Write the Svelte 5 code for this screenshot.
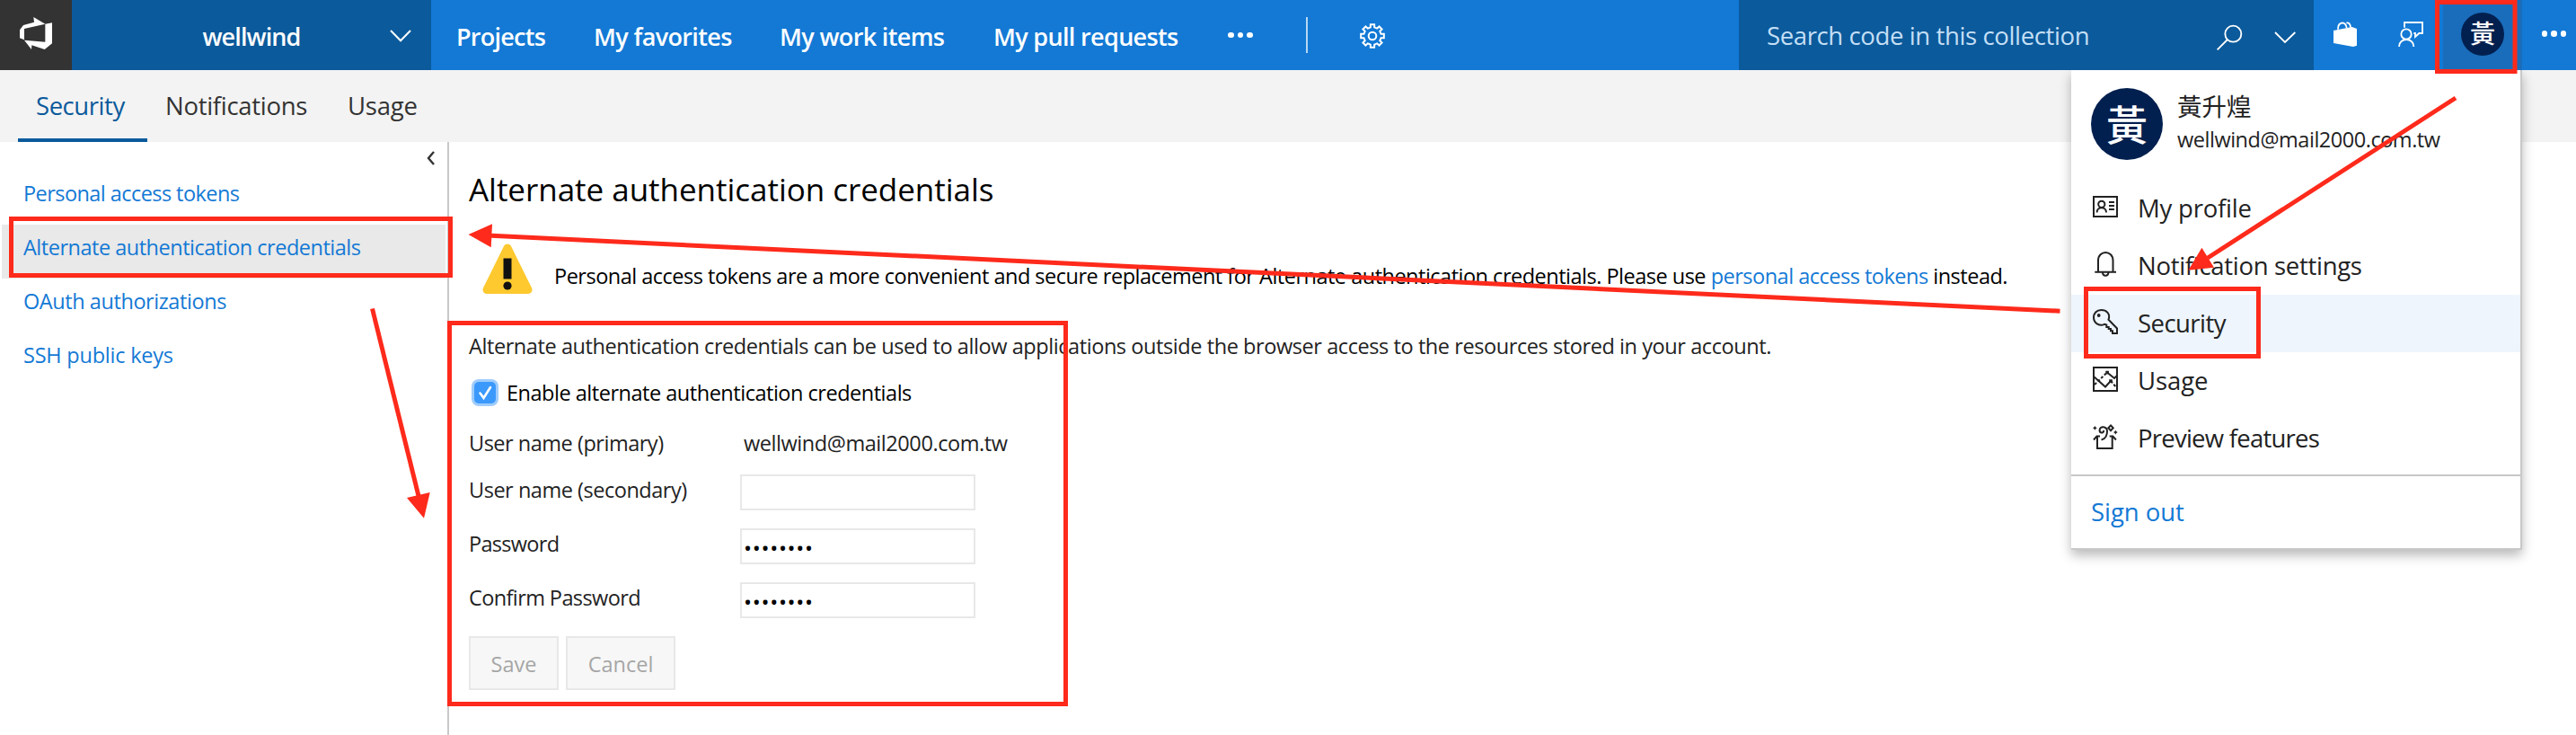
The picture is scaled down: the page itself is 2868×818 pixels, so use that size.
<script>
  const nav = [
    { label: 'Projects', track: -0.75 },
    { label: 'My favorites', track: -0.62 },
    { label: 'My work items', track: -0.64 },
    { label: 'My pull requests', track: -0.66 }
  ];
  const side = [
    { label: 'Personal access tokens', track: -0.56 },
    { label: 'Alternate authentication credentials', track: -0.49, active: true },
    { label: 'OAuth authorizations', track: -0.43 },
    { label: 'SSH public keys', track: -0.22 }
  ];
  const menu = [
    { id: 'profile', label: 'My profile', track: -0.2 },
    { id: 'bell', label: 'Notification settings', track: -0.3 },
    { id: 'key', label: 'Security', track: -0.55, active: true },
    { id: 'usage', label: 'Usage', track: -0.1 },
    { id: 'preview', label: 'Preview features', track: -0.76 }
  ];

  // Eight-toothed gear outline around (14, 14)
  const gear = (() => {
    const pts = [];
    const at = (deg, r) => {
      const a = ((deg - 90) * Math.PI) / 180;
      pts.push(`${(14 + r * Math.cos(a)).toFixed(2)} ${(14 + r * Math.sin(a)).toFixed(2)}`);
    };
    for (let i = 0; i < 8; i++) {
      const c = i * 45;
      at(c - 13, 9.8);
      at(c - 9.5, 13);
      at(c + 9.5, 13);
      at(c + 13, 9.8);
    }
    return 'M' + pts.join('L') + 'Z';
  })();
</script>

<div class="page">
  <header>
    <div class="logo">
      <svg width="70" height="56" viewBox="0 0 210 168" fill="#fff">
        <path d="M36 70 48 54 84 44 82 27 121 50 51 66V103L36 97Z" />
        <path d="M121 50 144 46V115L119 135 76 121 75 135 51 104 121 110Z" />
      </svg>
    </div>
    <div class="account">
      <span>wellwind</span>
      <svg class="acc-chev" width="24" height="14" viewBox="0 0 24 14"><path d="M1 1 12 12.3 23 1" /></svg>
    </div>
    <nav>
      {#each nav as n}<span style:letter-spacing="{n.track}px">{n.label}</span>{/each}
      <i class="dots"><b></b><b></b><b></b></i>
    </nav>
    <div class="sep"></div>
    <svg class="gear" width="28" height="28" viewBox="0 0 28 28"><path d={gear} /><circle cx="14" cy="14" r="4.3" /></svg>
    <div class="grow"></div>
    <div class="search">
      <span>Search code in this collection</span>
      <svg width="116" height="78" viewBox="0 -30 348 234">
        <circle cx="79" cy="83" r="27" /><path d="M60 102 26 136M219 78 252 111 286 78" />
      </svg>
    </div>
    <svg class="tool" width="72" height="78" viewBox="348 -30 216 234">
      <path d="M414 72 476 60 492 66V122L480 126 414 114Z" fill="#fff" stroke="none" />
      <path d="M429 68C429 40 457 40 458 64M457 47C466 44 471 52 471 62" />
    </svg>
    <svg class="tool" width="72" height="78" viewBox="564 -30 216 234">
      <path d="M651 62V45H711V81H700L687 93V81H682" /><circle cx="657" cy="84" r="17" /><path d="M633 126C633 94 682 94 682 126" />
    </svg>
    <div class="me"><div class="avatar small">黃</div></div>
    <div class="more"><i class="dots"><b></b><b></b><b></b></i></div>
  </header>

  <div class="tabs">
    <span class="on">Security</span>
    <span class="t2">Notifications</span>
    <span class="t3">Usage</span>
  </div>

  <div class="body">
    <aside>
      <div class="collapse"><svg width="10" height="16" viewBox="0 0 10 16"><path d="M8 1 2 8 8 15" /></svg></div>
      {#each side as s}
        <div class="srow" class:active={s.active} style:letter-spacing="{s.track}px">{s.label}</div>
      {/each}
    </aside>

    <main>
      <h1>Alternate authentication credentials</h1>
      <div class="warn">
        <svg width="56" height="58" viewBox="0 0 56 58">
          <path d="M28 5 51 51.500H5Z" fill="#fdc92f" stroke="#fdc92f" stroke-width="9" stroke-linejoin="round" />
          <path d="M23.500 16.500h9v23h-9z" fill="#111" /><circle cx="28" cy="47" r="4.6" fill="#111" />
        </svg>
        <p>Personal access tokens are a more convenient and secure replacement for Alternate authentication credentials. Please use <a>personal access tokens</a> instead.</p>
      </div>
      <p class="intro">Alternate authentication credentials can be used to allow applications outside the browser access to the resources stored in your account.</p>
      <div class="check">
        <span class="box"><svg width="24" height="24" viewBox="0 0 24 24"><path d="M6.500 12.500 10.500 18 18 6" /></svg></span>
        <span>Enable alternate authentication credentials</span>
      </div>
      <div class="row first"><label>User name (primary)</label><span class="val">wellwind@mail2000.com.tw</span></div>
      <div class="row"><label class="sec">User name (secondary)</label><div class="field"></div></div>
      <div class="row"><label class="pw">Password</label><div class="field">••••••••</div></div>
      <div class="row"><label class="cpw">Confirm Password</label><div class="field">••••••••</div></div>
      <div class="buttons"><button class="save">Save</button><button class="cancel">Cancel</button></div>
    </main>
  </div>

  <div class="menu">
    <div class="who">
      <div class="avatar">黃</div>
      <div class="id"><div class="name">黃升煌</div><div class="mail">wellwind@mail2000.com.tw</div></div>
    </div>
    {#each menu as m}
      <div class="item" class:active={m.active}>
        <svg width="28" height="28" viewBox="0 0 28 28">
          {#if m.id === 'profile'}
            <rect x="1" y="1" width="26" height="22" /><circle cx="9.8" cy="9.300" r="3.600" />
            <path d="M4.600 18.500C4.600 11.400 15 11.400 15 18.500M18 7h6M18 11h6M18 15h6" />
          {:else if m.id === 'bell'}
            <path d="M6 20.500V8C6-4 22.500-4 22.500 8V20.500M2.300 20.700H26M11 21C11 26 17.400 26 17.400 21" />
          {:else if m.id === 'key'}
            <circle class="fill" cx="6.700" cy="5" r="1.900" />
            <path d="M17.500 9.700C20 3 15-1 9.500-1 4-1 1 3 1 7.300 1 14 8 17.500 13 14.800L15.300 15.500V18H17.700V20H20V22.300H22V25H27V19.500Z" />
          {:else if m.id === 'usage'}
            <rect x="1" y="-1" width="26" height="26" />
            <path d="M1 9 14 20.500 20 14M16 4.500 24 11 27 8" /><path stroke-dasharray="3 2" d="M2 18 16 4.500M20 14 27 22" />
            <path class="fill" d="M14.300 2.700h3.600v3.600h-3.600zM18.200 12.200h3.600v3.600h-3.600z" />
          {:else}
            <path d="M1 15.500 4.500 11.500H8M5 12V25H21.700V12M18.700 11.500H22.300L25.900 15.500" />
            <path d="M9.500 15.500C14.500 14.500 16 9.500 16 6 16 .5 8-.5 7.600 4.500 7.400 8.500 12.300 8.500 12.200 5" />
            <path class="fill" d="M2.300 0 3.300 1.500 4.800 2.300 3.300 3.200 2.300 4.700 1.400 3.200 0 2.300 1.400 1.500ZM25.300 4.700 26.300 6.200 27.800 7 26.300 7.900 25.300 9.400 24.400 7.900 23 7 24.400 6.200Z" />
            <path d="M20-.6 22.700 2.300 20 5.200 17.300 2.300Z" />
          {/if}
        </svg>
        <span style:letter-spacing="{m.track}px">{m.label}</span>
      </div>
    {/each}
    <div class="out">Sign out</div>
  </div>

  <svg class="marks" width="2868" height="818" viewBox="0 0 2868 818">
    <g fill="none" stroke="#fe2a1b" stroke-width="5">
      <rect x="2713.500" y="2.500" width="86.500" height="77" />
      <rect x="2322.500" y="321.500" width="192" height="75" />
      <rect x="12.500" y="243.500" width="489" height="63" />
      <rect x="500.500" y="359.500" width="686" height="424" />
      <path d="M2734 109 2458 287" />
      <path d="M2293.500 346.200 547 262.300" />
      <path d="M414.500 343.500 466 552" />
    </g>
    <g fill="#fe2a1b">
      <path d="M2436.400 300.700 2451.400 275.700 2465 297.700Z" />
      <path d="M521.500 261 548 249.300 546.700 275.300Z" />
      <path d="M472 576.700 453 554 478.700 548Z" />
    </g>
  </svg>
</div>

<style>
  :global(body) { background: #fff; }
  * { box-sizing: border-box; }
  .page {
    position: relative; width: 2868px; height: 818px; overflow: hidden; background: #fff;
    font-family: "Open Sans", "Noto Sans CJK TC", sans-serif; font-size: 23.5px; color: #222; white-space: nowrap;
    display: flex; flex-direction: column;
  }
  svg { flex: none; overflow: visible; }
  header { height: 78px; flex: none; display: flex; align-items: center; background: #1379d5; color: #fff; font-size: 27.5px; }
  .logo { width: 80px; height: 78px; background: #333; padding: 10px 0 0 10px; }
  .account { width: 400px; height: 78px; background: #0b5a9b; font-weight: 600; font-size: 27px; letter-spacing: -.88px; display: flex; align-items: center; justify-content: center; position: relative; padding-top: 2px; }
  .acc-chev { position: absolute; right: 22px; top: 33px; fill: none; stroke: #fff; stroke-width: 2; }
  nav { display: grid; grid-template-columns: 153px 207px 238px 261px 28px; align-items: center; padding: 2px 0 0 28px; font-weight: 600; font-size: 27px; }
  .dots { display: flex; gap: 4px; }
  .dots b { width: 6.500px; height: 6.500px; border-radius: 50%; background: #fff; }
  nav .dots { margin-top: -2px; }
  .sep { width: 2px; height: 40px; margin-left: 59px; background: rgba(255,255,255,.7); }
  .gear { margin: 2px 0 0 58px; fill: none; stroke: #fff; stroke-width: 2; }
  .grow { flex: 1; }
  .search { width: 640px; height: 78px; background: #0b5a9b; display: flex; justify-content: space-between; align-items: center; color: #c4dff5; letter-spacing: -.38px; padding-left: 31px; }
  .search span { padding-top: 1px; }
  .search svg, .tool { fill: none; stroke: #fff; stroke-width: 5.500; }
  .me { width: 88px; height: 78px; background: #1a6dbb; display: flex; align-items: center; justify-content: center; padding-bottom: 2px; }
  .avatar { width: 80px; height: 80px; flex: none; border-radius: 50%; background: #02204f; color: #fff; font: 500 46px/76px "Noto Sans CJK TC", sans-serif; text-align: center; }
  .avatar.small { width: 48px; height: 48px; font-size: 28px; line-height: 44px; }
  .more { width: 60px; display: flex; justify-content: flex-end; padding: 0 11px 3px 0; }

  .tabs { height: 80px; flex: none; background: #f3f3f3; display: flex; font-size: 27.5px; line-height: 80px; color: #333; padding-left: 20px; }
  .on { width: 144px; color: #0b5a9b; border-bottom: 4px solid #0b5a9b; padding-left: 20px; letter-spacing: -.45px; }
  .t2 { width: 203px; padding-left: 20px; letter-spacing: -.3px; }
  .t3 { padding-left: 20px; letter-spacing: -.2px; }

  .body { flex: 1; display: flex; }
  aside { width: 500px; border-right: 2px solid #c8c8c8; }
  .collapse { height: 32px; display: flex; justify-content: flex-end; padding: 10px 13px 0 0; }
  .collapse svg { fill: none; stroke: #333; stroke-width: 2.400; }
  .srow { height: 60px; margin: 0 2px; padding-left: 24px; line-height: 50px; color: #1379d5; }
  main { flex: 1; padding: 28px 0 0 22px; }
  .srow.active { background: #e9e9e9; }
  h1 { margin: 0; font-size: 35px; font-weight: 400; line-height: 49px; height: 48px; letter-spacing: -.03px; color: #000; }
  p { margin: 0; }
  .warn { display: flex; margin: 28px 0 0 14px; height: 76px; align-items: center; color: #000; letter-spacing: -.5px; }
  .warn p { padding: 13px 0 0 24px; }
  .warn svg { margin-left: 1px; }
  a { color: #1379d5; }
  .intro { margin-top: 30px; line-height: 34px; letter-spacing: -.42px; }
  .check { margin-top: 18px; height: 34px; display: flex; align-items: center; gap: 9px; color: #000; padding-left: 3px; letter-spacing: -.48px; }
  .box { width: 30px; height: 30px; border-radius: 8px; background: #9fccfb; padding: 3px; display: flex; }
  .box svg { border-radius: 5px; background: #3b99fc; fill: none; stroke: #fff; stroke-width: 2.600; stroke-linecap: round; }
  .row { display: flex; height: 40px; margin-bottom: 20px; line-height: 34px; }
  .row.first { height: 46px; line-height: 46px; margin: 16px 0 12px; letter-spacing: -.48px; }
  label { width: 302px; }
  .sec { letter-spacing: -.47px; }
  .pw { letter-spacing: -.7px; }
  .cpw { letter-spacing: -.6px; }
  .val { padding-left: 4px; letter-spacing: -.43px; }
  .field { width: 262px; height: 40px; border: 2px solid #e8e8e8; padding: 2px 2px 0; color: #000; font-size: 24px; line-height: 36px; letter-spacing: .7px; }
  .buttons { display: flex; gap: 8px; }
  button { height: 60px; border: 2px solid #e8e8e8; background: #f7f7f7; color: #a6a6a6; font: inherit; padding: 1px 0 0; }
  .save { width: 100px; }
  .cancel { width: 122px; }

  .menu { position: absolute; left: 2306px; top: 78px; width: 502px; height: 534px; background: #fff; border: solid #c8c8c8; border-width: 0 2px 2px 0; box-shadow: 0 6px 12px rgba(0,0,0,.28); clip-path: inset(0 -20px -30px -20px); }
  .who { display: flex; height: 122px; padding: 20px 0 0 22px; }
  .id { padding: 1px 0 0 16px; line-height: 36px; }
  .name { font: 400 27.5px/36px "Noto Sans CJK TC", sans-serif; height: 39px; }
  .mail { letter-spacing: -.47px; line-height: 34px; }
  .item { height: 64px; display: flex; align-items: center; padding-left: 24px; gap: 22px; font-size: 27.5px; }
  .item span { margin-top: -1px; }
  .item.active { background: #eef5fc; }
  .item svg { fill: none; stroke: #222; stroke-width: 2; }
  .item .fill { fill: #222; stroke: none; }
  .out { margin-top: 8px; border-top: 2px solid #c8c8c8; height: 82px; line-height: 80px; padding-left: 22px; color: #1379d5; font-size: 27.5px; letter-spacing: -.05px; }
  .marks { position: absolute; left: 0; top: 0; pointer-events: none; }
</style>
